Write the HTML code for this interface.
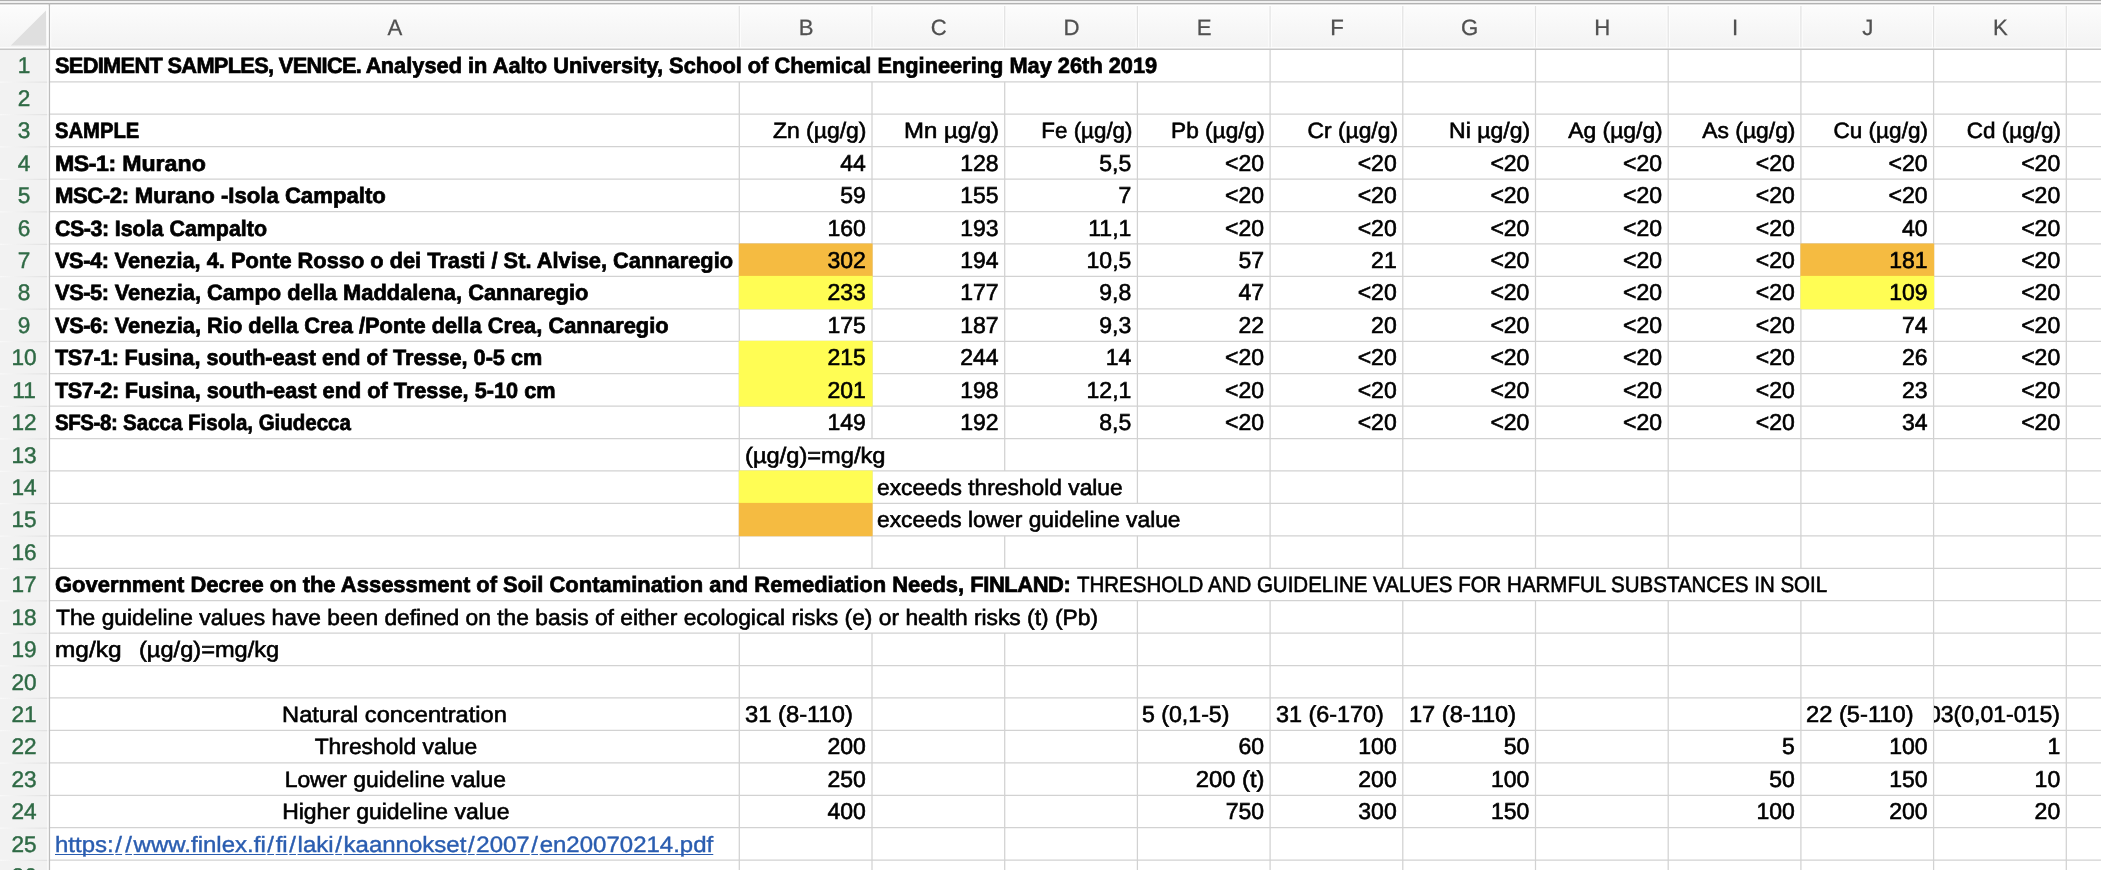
<!DOCTYPE html>
<html><head><meta charset="utf-8"><title>Sediment samples</title>
<style>
html,body{margin:0;padding:0;background:#fff;}
body{width:2101px;height:870px;overflow:hidden;position:relative;font-family:"Liberation Sans",sans-serif;}
#g{position:absolute;left:0;top:0;}
#tx{position:absolute;left:0;top:0;width:2101px;height:870px;will-change:transform;}
.t{position:absolute;white-space:pre;text-rendering:geometricPrecision;font-size:22.2px;line-height:26px;height:26px;}
.t span{display:inline-block;-webkit-text-stroke:0.6px currentColor;}
.b{font-weight:bold;}
.b span{-webkit-text-stroke-width:0.7px;}
i{font-style:normal;}
.url span{text-decoration:underline;text-decoration-thickness:1.3px;text-underline-offset:2.4px;text-decoration-skip-ink:none;-webkit-text-stroke-width:0.4px;}
.num{font-size:23.0px;}
.rn{font-size:22.6px;}
.rn span{-webkit-text-stroke-width:0.45px;}
.ch span{-webkit-text-stroke-width:0.25px;}
.clip{position:absolute;overflow:hidden;}
</style></head><body>

<svg id="g" width="2101" height="870" viewBox="0 0 2101 870">
<defs><linearGradient id="hg" gradientUnits="userSpaceOnUse" x1="0" x2="0" y1="5.7" y2="47.3"><stop offset="0" stop-color="#fcfcfc"/><stop offset="1" stop-color="#f3f3f3"/></linearGradient><linearGradient id="rg" gradientUnits="userSpaceOnUse" x1="0" x2="49" y1="0" y2="0"><stop offset="0" stop-color="#f9f9f9"/><stop offset="1" stop-color="#e0e0e0"/></linearGradient></defs>
<rect x="0" y="0" width="2101" height="870" fill="#fff"/>
<rect x="0" y="0" width="2101" height="4" fill="#f0f0f0"/>
<rect x="0" y="0" width="2101" height="0.8" fill="#a0a0a0"/>
<rect x="0" y="3.0" width="2101" height="1.4" fill="#b2b2b2"/>
<rect x="0" y="5.7" width="2101" height="41.6" fill="url(#hg)"/>
<rect x="0" y="49.38" width="49.40" height="820.62" fill="#f2f2f2"/>
<path d="M46 10.5 L46 45.6 L10.8 45.6 Z" fill="#dfdfdf"/>
<line x1="49.40" y1="81.81" x2="2101" y2="81.81" stroke="#d2d2d2" stroke-width="1.25"/>
<line x1="0" y1="82.11" x2="49.40" y2="82.11" stroke="url(#rg)" stroke-width="1.25"/>
<line x1="49.40" y1="114.24" x2="2101" y2="114.24" stroke="#d2d2d2" stroke-width="1.25"/>
<line x1="0" y1="114.54" x2="49.40" y2="114.54" stroke="url(#rg)" stroke-width="1.25"/>
<line x1="49.40" y1="146.67" x2="2101" y2="146.67" stroke="#d2d2d2" stroke-width="1.25"/>
<line x1="0" y1="146.97" x2="49.40" y2="146.97" stroke="url(#rg)" stroke-width="1.25"/>
<line x1="49.40" y1="179.10" x2="2101" y2="179.10" stroke="#d2d2d2" stroke-width="1.25"/>
<line x1="0" y1="179.40" x2="49.40" y2="179.40" stroke="url(#rg)" stroke-width="1.25"/>
<line x1="49.40" y1="211.53" x2="2101" y2="211.53" stroke="#d2d2d2" stroke-width="1.25"/>
<line x1="0" y1="211.83" x2="49.40" y2="211.83" stroke="url(#rg)" stroke-width="1.25"/>
<line x1="49.40" y1="243.96" x2="2101" y2="243.96" stroke="#d2d2d2" stroke-width="1.25"/>
<line x1="0" y1="244.26" x2="49.40" y2="244.26" stroke="url(#rg)" stroke-width="1.25"/>
<line x1="49.40" y1="276.39" x2="2101" y2="276.39" stroke="#d2d2d2" stroke-width="1.25"/>
<line x1="0" y1="276.69" x2="49.40" y2="276.69" stroke="url(#rg)" stroke-width="1.25"/>
<line x1="49.40" y1="308.82" x2="2101" y2="308.82" stroke="#d2d2d2" stroke-width="1.25"/>
<line x1="0" y1="309.12" x2="49.40" y2="309.12" stroke="url(#rg)" stroke-width="1.25"/>
<line x1="49.40" y1="341.25" x2="2101" y2="341.25" stroke="#d2d2d2" stroke-width="1.25"/>
<line x1="0" y1="341.55" x2="49.40" y2="341.55" stroke="url(#rg)" stroke-width="1.25"/>
<line x1="49.40" y1="373.68" x2="2101" y2="373.68" stroke="#d2d2d2" stroke-width="1.25"/>
<line x1="0" y1="373.98" x2="49.40" y2="373.98" stroke="url(#rg)" stroke-width="1.25"/>
<line x1="49.40" y1="406.11" x2="2101" y2="406.11" stroke="#d2d2d2" stroke-width="1.25"/>
<line x1="0" y1="406.41" x2="49.40" y2="406.41" stroke="url(#rg)" stroke-width="1.25"/>
<line x1="49.40" y1="438.54" x2="2101" y2="438.54" stroke="#d2d2d2" stroke-width="1.25"/>
<line x1="0" y1="438.84" x2="49.40" y2="438.84" stroke="url(#rg)" stroke-width="1.25"/>
<line x1="49.40" y1="470.97" x2="2101" y2="470.97" stroke="#d2d2d2" stroke-width="1.25"/>
<line x1="0" y1="471.27" x2="49.40" y2="471.27" stroke="url(#rg)" stroke-width="1.25"/>
<line x1="49.40" y1="503.40" x2="2101" y2="503.40" stroke="#d2d2d2" stroke-width="1.25"/>
<line x1="0" y1="503.70" x2="49.40" y2="503.70" stroke="url(#rg)" stroke-width="1.25"/>
<line x1="49.40" y1="535.83" x2="2101" y2="535.83" stroke="#d2d2d2" stroke-width="1.25"/>
<line x1="0" y1="536.13" x2="49.40" y2="536.13" stroke="url(#rg)" stroke-width="1.25"/>
<line x1="49.40" y1="568.26" x2="2101" y2="568.26" stroke="#d2d2d2" stroke-width="1.25"/>
<line x1="0" y1="568.56" x2="49.40" y2="568.56" stroke="url(#rg)" stroke-width="1.25"/>
<line x1="49.40" y1="600.69" x2="2101" y2="600.69" stroke="#d2d2d2" stroke-width="1.25"/>
<line x1="0" y1="600.99" x2="49.40" y2="600.99" stroke="url(#rg)" stroke-width="1.25"/>
<line x1="49.40" y1="633.12" x2="2101" y2="633.12" stroke="#d2d2d2" stroke-width="1.25"/>
<line x1="0" y1="633.42" x2="49.40" y2="633.42" stroke="url(#rg)" stroke-width="1.25"/>
<line x1="49.40" y1="665.55" x2="2101" y2="665.55" stroke="#d2d2d2" stroke-width="1.25"/>
<line x1="0" y1="665.85" x2="49.40" y2="665.85" stroke="url(#rg)" stroke-width="1.25"/>
<line x1="49.40" y1="697.98" x2="2101" y2="697.98" stroke="#d2d2d2" stroke-width="1.25"/>
<line x1="0" y1="698.28" x2="49.40" y2="698.28" stroke="url(#rg)" stroke-width="1.25"/>
<line x1="49.40" y1="730.41" x2="2101" y2="730.41" stroke="#d2d2d2" stroke-width="1.25"/>
<line x1="0" y1="730.71" x2="49.40" y2="730.71" stroke="url(#rg)" stroke-width="1.25"/>
<line x1="49.40" y1="762.84" x2="2101" y2="762.84" stroke="#d2d2d2" stroke-width="1.25"/>
<line x1="0" y1="763.14" x2="49.40" y2="763.14" stroke="url(#rg)" stroke-width="1.25"/>
<line x1="49.40" y1="795.27" x2="2101" y2="795.27" stroke="#d2d2d2" stroke-width="1.25"/>
<line x1="0" y1="795.57" x2="49.40" y2="795.57" stroke="url(#rg)" stroke-width="1.25"/>
<line x1="49.40" y1="827.70" x2="2101" y2="827.70" stroke="#d2d2d2" stroke-width="1.25"/>
<line x1="0" y1="828.00" x2="49.40" y2="828.00" stroke="url(#rg)" stroke-width="1.25"/>
<line x1="49.40" y1="860.13" x2="2101" y2="860.13" stroke="#d2d2d2" stroke-width="1.25"/>
<line x1="0" y1="860.43" x2="49.40" y2="860.43" stroke="url(#rg)" stroke-width="1.25"/>
<line x1="739.30" y1="81.81" x2="739.30" y2="568.26" stroke="#d2d2d2" stroke-width="1.25"/>
<line x1="739.30" y1="633.12" x2="739.30" y2="870.00" stroke="#d2d2d2" stroke-width="1.25"/>
<line x1="739.30" y1="6" x2="739.30" y2="48.4" stroke="#fdfdfd" stroke-width="3.4"/>
<line x1="739.30" y1="6" x2="739.30" y2="48.4" stroke="#e2e2e2" stroke-width="1.2"/>
<line x1="872.00" y1="81.81" x2="872.00" y2="438.54" stroke="#d2d2d2" stroke-width="1.25"/>
<line x1="872.00" y1="470.97" x2="872.00" y2="568.26" stroke="#d2d2d2" stroke-width="1.25"/>
<line x1="872.00" y1="633.12" x2="872.00" y2="870.00" stroke="#d2d2d2" stroke-width="1.25"/>
<line x1="872.00" y1="6" x2="872.00" y2="48.4" stroke="#fdfdfd" stroke-width="3.4"/>
<line x1="872.00" y1="6" x2="872.00" y2="48.4" stroke="#e2e2e2" stroke-width="1.2"/>
<line x1="1004.70" y1="81.81" x2="1004.70" y2="470.97" stroke="#d2d2d2" stroke-width="1.25"/>
<line x1="1004.70" y1="535.83" x2="1004.70" y2="568.26" stroke="#d2d2d2" stroke-width="1.25"/>
<line x1="1004.70" y1="633.12" x2="1004.70" y2="870.00" stroke="#d2d2d2" stroke-width="1.25"/>
<line x1="1004.70" y1="6" x2="1004.70" y2="48.4" stroke="#fdfdfd" stroke-width="3.4"/>
<line x1="1004.70" y1="6" x2="1004.70" y2="48.4" stroke="#e2e2e2" stroke-width="1.2"/>
<line x1="1137.40" y1="81.81" x2="1137.40" y2="503.40" stroke="#d2d2d2" stroke-width="1.25"/>
<line x1="1137.40" y1="535.83" x2="1137.40" y2="568.26" stroke="#d2d2d2" stroke-width="1.25"/>
<line x1="1137.40" y1="600.69" x2="1137.40" y2="870.00" stroke="#d2d2d2" stroke-width="1.25"/>
<line x1="1137.40" y1="6" x2="1137.40" y2="48.4" stroke="#fdfdfd" stroke-width="3.4"/>
<line x1="1137.40" y1="6" x2="1137.40" y2="48.4" stroke="#e2e2e2" stroke-width="1.2"/>
<line x1="1270.10" y1="49.38" x2="1270.10" y2="568.26" stroke="#d2d2d2" stroke-width="1.25"/>
<line x1="1270.10" y1="600.69" x2="1270.10" y2="870.00" stroke="#d2d2d2" stroke-width="1.25"/>
<line x1="1270.10" y1="6" x2="1270.10" y2="48.4" stroke="#fdfdfd" stroke-width="3.4"/>
<line x1="1270.10" y1="6" x2="1270.10" y2="48.4" stroke="#e2e2e2" stroke-width="1.2"/>
<line x1="1402.80" y1="49.38" x2="1402.80" y2="568.26" stroke="#d2d2d2" stroke-width="1.25"/>
<line x1="1402.80" y1="600.69" x2="1402.80" y2="870.00" stroke="#d2d2d2" stroke-width="1.25"/>
<line x1="1402.80" y1="6" x2="1402.80" y2="48.4" stroke="#fdfdfd" stroke-width="3.4"/>
<line x1="1402.80" y1="6" x2="1402.80" y2="48.4" stroke="#e2e2e2" stroke-width="1.2"/>
<line x1="1535.50" y1="49.38" x2="1535.50" y2="568.26" stroke="#d2d2d2" stroke-width="1.25"/>
<line x1="1535.50" y1="600.69" x2="1535.50" y2="870.00" stroke="#d2d2d2" stroke-width="1.25"/>
<line x1="1535.50" y1="6" x2="1535.50" y2="48.4" stroke="#fdfdfd" stroke-width="3.4"/>
<line x1="1535.50" y1="6" x2="1535.50" y2="48.4" stroke="#e2e2e2" stroke-width="1.2"/>
<line x1="1668.20" y1="49.38" x2="1668.20" y2="568.26" stroke="#d2d2d2" stroke-width="1.25"/>
<line x1="1668.20" y1="600.69" x2="1668.20" y2="870.00" stroke="#d2d2d2" stroke-width="1.25"/>
<line x1="1668.20" y1="6" x2="1668.20" y2="48.4" stroke="#fdfdfd" stroke-width="3.4"/>
<line x1="1668.20" y1="6" x2="1668.20" y2="48.4" stroke="#e2e2e2" stroke-width="1.2"/>
<line x1="1800.90" y1="49.38" x2="1800.90" y2="568.26" stroke="#d2d2d2" stroke-width="1.25"/>
<line x1="1800.90" y1="600.69" x2="1800.90" y2="870.00" stroke="#d2d2d2" stroke-width="1.25"/>
<line x1="1800.90" y1="6" x2="1800.90" y2="48.4" stroke="#fdfdfd" stroke-width="3.4"/>
<line x1="1800.90" y1="6" x2="1800.90" y2="48.4" stroke="#e2e2e2" stroke-width="1.2"/>
<line x1="1933.60" y1="49.38" x2="1933.60" y2="870.00" stroke="#d2d2d2" stroke-width="1.25"/>
<line x1="1933.60" y1="6" x2="1933.60" y2="48.4" stroke="#fdfdfd" stroke-width="3.4"/>
<line x1="1933.60" y1="6" x2="1933.60" y2="48.4" stroke="#e2e2e2" stroke-width="1.2"/>
<line x1="2066.30" y1="49.38" x2="2066.30" y2="870.00" stroke="#d2d2d2" stroke-width="1.25"/>
<line x1="2066.30" y1="6" x2="2066.30" y2="48.4" stroke="#fdfdfd" stroke-width="3.4"/>
<line x1="2066.30" y1="6" x2="2066.30" y2="48.4" stroke="#e2e2e2" stroke-width="1.2"/>
<rect x="738.80" y="243.46" width="133.80" height="33.33" fill="#f5bb41"/>
<rect x="738.80" y="275.89" width="133.80" height="33.33" fill="#fffd54"/>
<rect x="738.80" y="340.75" width="133.80" height="33.33" fill="#fffd54"/>
<rect x="738.80" y="373.18" width="133.80" height="33.33" fill="#fffd54"/>
<rect x="1800.40" y="243.46" width="133.80" height="33.33" fill="#f5bb41"/>
<rect x="1800.40" y="275.89" width="133.80" height="33.33" fill="#fffd54"/>
<rect x="738.80" y="470.47" width="133.80" height="33.33" fill="#fffd54"/>
<rect x="738.80" y="502.90" width="133.80" height="33.33" fill="#f5bb41"/>
<rect x="0" y="47.4" width="2101" height="1.1" fill="#fdfdfd"/>
<line x1="0" y1="49.20" x2="2101" y2="49.20" stroke="#c6c6c6" stroke-width="1.4"/>
<line x1="49.40" y1="3.6" x2="49.40" y2="870" stroke="#bdbdbd" stroke-width="1.4"/>
<rect x="46.9" y="5.7" width="1.7" height="42" fill="#fdfdfd"/>
<rect x="47.2" y="50" width="1.4" height="830" fill="#fafafa"/>
<rect x="50.2" y="5.7" width="1.0" height="42" fill="#fdfdfd"/>
</svg>
<div id="tx">
<div class="t b" style="left:55.30px;top:53.00px;color:#000;"><span id="a1" style="transform:scaleX(0.9824);transform-origin:left center"><i style="letter-spacing:-0.7px">SEDIMENT SAMPLES, VENICE. A</i>nalysed in Aalto University, School of Chemical Engineering May 26th 2019</span></div>
<div class="t b" style="left:55.30px;top:118.00px;color:#000;"><span id="a3" style="transform:scaleX(0.9117);transform-origin:left center">SAMPLE</span></div>
<div class="t b" style="left:55.00px;top:151.00px;color:#000;"><span id="a4" style="transform:scaleX(1.0440);transform-origin:left center"><i style="letter-spacing:-0.45px">MS-1:</i> Murano</span></div>
<div class="t b" style="left:55.00px;top:183.00px;color:#000;"><span id="a5" style="transform:scaleX(0.9982);transform-origin:left center"><i style="letter-spacing:-0.45px">MSC-2:</i> Murano -Isola Campalto</span></div>
<div class="t b" style="left:55.30px;top:216.00px;color:#000;"><span id="a6" style="transform:scaleX(0.9650);transform-origin:left center"><i style="letter-spacing:-0.45px">CS-3:</i> Isola Campalto</span></div>
<div class="t b" style="left:55.30px;top:248.00px;color:#000;"><span id="a7" style="transform:scaleX(0.9828);transform-origin:left center"><i style="letter-spacing:-0.45px">VS-4:</i> Venezia, 4. Ponte Rosso o dei Trasti / St. Alvise, Cannaregio</span></div>
<div class="t b" style="left:55.30px;top:280.00px;color:#000;"><span id="a8" style="transform:scaleX(0.9850);transform-origin:left center"><i style="letter-spacing:-0.45px">VS-5:</i> Venezia, Campo della Maddalena, Cannaregio</span></div>
<div class="t b" style="left:55.30px;top:313.00px;color:#000;"><span id="a9" style="transform:scaleX(0.9851);transform-origin:left center"><i style="letter-spacing:-0.45px">VS-6:</i> Venezia, Rio della Crea /Ponte della Crea, Cannaregio</span></div>
<div class="t b" style="left:55.30px;top:345.00px;color:#000;"><span id="a10" style="transform:scaleX(0.9762);transform-origin:left center"><i style="letter-spacing:-0.45px">TS7-1:</i> Fusina, south-east end of Tresse, 0-5 cm</span></div>
<div class="t b" style="left:55.30px;top:378.00px;color:#000;"><span id="a11" style="transform:scaleX(0.9786);transform-origin:left center"><i style="letter-spacing:-0.45px">TS7-2:</i> Fusina, south-east end of Tresse, 5-10 cm</span></div>
<div class="t b" style="left:55.30px;top:410.00px;color:#000;"><span id="a12" style="transform:scaleX(0.9236);transform-origin:left center"><i style="letter-spacing:-0.45px">SFS-8:</i> Sacca Fisola, Giudecca</span></div>
<div class="t" style="right:1234.20px;top:118.00px;color:#000;"><span id="hB" style="transform:scaleX(1.0335);transform-origin:right center">Zn (µg/g)</span></div>
<div class="t" style="right:1101.50px;top:118.00px;color:#000;"><span id="hC" style="transform:scaleX(1.0805);transform-origin:right center">Mn µg/g)</span></div>
<div class="t" style="right:968.80px;top:118.00px;color:#000;"><span id="hD" style="transform:scaleX(1.0070);transform-origin:right center">Fe (µg/g)</span></div>
<div class="t" style="right:836.10px;top:118.00px;color:#000;"><span id="hE" style="transform:scaleX(1.0216);transform-origin:right center">Pb (µg/g)</span></div>
<div class="t" style="right:703.40px;top:118.00px;color:#000;"><span id="hF" style="transform:scaleX(1.0286);transform-origin:right center">Cr (µg/g)</span></div>
<div class="t" style="right:570.70px;top:118.00px;color:#000;"><span id="hG" style="transform:scaleX(1.0379);transform-origin:right center">Ni µg/g)</span></div>
<div class="t" style="right:438.00px;top:118.00px;color:#000;"><span id="hH" style="transform:scaleX(1.0304);transform-origin:right center">Ag (µg/g)</span></div>
<div class="t" style="right:305.30px;top:118.00px;color:#000;"><span id="hI" style="transform:scaleX(1.0291);transform-origin:right center">As (µg/g)</span></div>
<div class="t" style="right:172.60px;top:118.00px;color:#000;"><span id="hJ" style="transform:scaleX(1.0157);transform-origin:right center">Cu (µg/g)</span></div>
<div class="t" style="right:39.90px;top:118.00px;color:#000;"><span id="hK" style="transform:scaleX(1.0125);transform-origin:right center">Cd (µg/g)</span></div>
<div class="t num" style="right:1235.10px;top:150.00px;color:#000;"><span id="dB4" style="transform:scaleX(1.0000);transform-origin:right center">44</span></div>
<div class="t num" style="right:1102.40px;top:150.00px;color:#000;"><span id="dC4" style="transform:scaleX(1.0000);transform-origin:right center">128</span></div>
<div class="t num" style="right:969.70px;top:150.00px;color:#000;"><span id="dD4" style="transform:scaleX(1.0000);transform-origin:right center">5,5</span></div>
<div class="t num" style="right:837.00px;top:150.00px;color:#000;"><span id="dE4" style="transform:scaleX(1.0000);transform-origin:right center">&lt;20</span></div>
<div class="t num" style="right:704.30px;top:150.00px;color:#000;"><span id="dF4" style="transform:scaleX(1.0000);transform-origin:right center">&lt;20</span></div>
<div class="t num" style="right:571.60px;top:150.00px;color:#000;"><span id="dG4" style="transform:scaleX(1.0000);transform-origin:right center">&lt;20</span></div>
<div class="t num" style="right:438.90px;top:150.00px;color:#000;"><span id="dH4" style="transform:scaleX(1.0000);transform-origin:right center">&lt;20</span></div>
<div class="t num" style="right:306.20px;top:150.00px;color:#000;"><span id="dI4" style="transform:scaleX(1.0000);transform-origin:right center">&lt;20</span></div>
<div class="t num" style="right:173.50px;top:150.00px;color:#000;"><span id="dJ4" style="transform:scaleX(1.0000);transform-origin:right center">&lt;20</span></div>
<div class="t num" style="right:40.80px;top:150.00px;color:#000;"><span id="dK4" style="transform:scaleX(1.0000);transform-origin:right center">&lt;20</span></div>
<div class="t num" style="right:1235.10px;top:182.00px;color:#000;"><span id="dB5" style="transform:scaleX(1.0000);transform-origin:right center">59</span></div>
<div class="t num" style="right:1102.40px;top:182.00px;color:#000;"><span id="dC5" style="transform:scaleX(1.0000);transform-origin:right center">155</span></div>
<div class="t num" style="right:969.70px;top:182.00px;color:#000;"><span id="dD5" style="transform:scaleX(1.0000);transform-origin:right center">7</span></div>
<div class="t num" style="right:837.00px;top:182.00px;color:#000;"><span id="dE5" style="transform:scaleX(1.0000);transform-origin:right center">&lt;20</span></div>
<div class="t num" style="right:704.30px;top:182.00px;color:#000;"><span id="dF5" style="transform:scaleX(1.0000);transform-origin:right center">&lt;20</span></div>
<div class="t num" style="right:571.60px;top:182.00px;color:#000;"><span id="dG5" style="transform:scaleX(1.0000);transform-origin:right center">&lt;20</span></div>
<div class="t num" style="right:438.90px;top:182.00px;color:#000;"><span id="dH5" style="transform:scaleX(1.0000);transform-origin:right center">&lt;20</span></div>
<div class="t num" style="right:306.20px;top:182.00px;color:#000;"><span id="dI5" style="transform:scaleX(1.0000);transform-origin:right center">&lt;20</span></div>
<div class="t num" style="right:173.50px;top:182.00px;color:#000;"><span id="dJ5" style="transform:scaleX(1.0000);transform-origin:right center">&lt;20</span></div>
<div class="t num" style="right:40.80px;top:182.00px;color:#000;"><span id="dK5" style="transform:scaleX(1.0000);transform-origin:right center">&lt;20</span></div>
<div class="t num" style="right:1235.10px;top:215.00px;color:#000;"><span id="dB6" style="transform:scaleX(1.0000);transform-origin:right center">160</span></div>
<div class="t num" style="right:1102.40px;top:215.00px;color:#000;"><span id="dC6" style="transform:scaleX(1.0000);transform-origin:right center">193</span></div>
<div class="t num" style="right:969.70px;top:215.00px;color:#000;"><span id="dD6" style="transform:scaleX(1.0000);transform-origin:right center">11,1</span></div>
<div class="t num" style="right:837.00px;top:215.00px;color:#000;"><span id="dE6" style="transform:scaleX(1.0000);transform-origin:right center">&lt;20</span></div>
<div class="t num" style="right:704.30px;top:215.00px;color:#000;"><span id="dF6" style="transform:scaleX(1.0000);transform-origin:right center">&lt;20</span></div>
<div class="t num" style="right:571.60px;top:215.00px;color:#000;"><span id="dG6" style="transform:scaleX(1.0000);transform-origin:right center">&lt;20</span></div>
<div class="t num" style="right:438.90px;top:215.00px;color:#000;"><span id="dH6" style="transform:scaleX(1.0000);transform-origin:right center">&lt;20</span></div>
<div class="t num" style="right:306.20px;top:215.00px;color:#000;"><span id="dI6" style="transform:scaleX(1.0000);transform-origin:right center">&lt;20</span></div>
<div class="t num" style="right:173.50px;top:215.00px;color:#000;"><span id="dJ6" style="transform:scaleX(1.0000);transform-origin:right center">40</span></div>
<div class="t num" style="right:40.80px;top:215.00px;color:#000;"><span id="dK6" style="transform:scaleX(1.0000);transform-origin:right center">&lt;20</span></div>
<div class="t num" style="right:1235.10px;top:247.00px;color:#000;"><span id="dB7" style="transform:scaleX(1.0000);transform-origin:right center">302</span></div>
<div class="t num" style="right:1102.40px;top:247.00px;color:#000;"><span id="dC7" style="transform:scaleX(1.0000);transform-origin:right center">194</span></div>
<div class="t num" style="right:969.70px;top:247.00px;color:#000;"><span id="dD7" style="transform:scaleX(1.0000);transform-origin:right center">10,5</span></div>
<div class="t num" style="right:837.00px;top:247.00px;color:#000;"><span id="dE7" style="transform:scaleX(1.0000);transform-origin:right center">57</span></div>
<div class="t num" style="right:704.30px;top:247.00px;color:#000;"><span id="dF7" style="transform:scaleX(1.0000);transform-origin:right center">21</span></div>
<div class="t num" style="right:571.60px;top:247.00px;color:#000;"><span id="dG7" style="transform:scaleX(1.0000);transform-origin:right center">&lt;20</span></div>
<div class="t num" style="right:438.90px;top:247.00px;color:#000;"><span id="dH7" style="transform:scaleX(1.0000);transform-origin:right center">&lt;20</span></div>
<div class="t num" style="right:306.20px;top:247.00px;color:#000;"><span id="dI7" style="transform:scaleX(1.0000);transform-origin:right center">&lt;20</span></div>
<div class="t num" style="right:173.50px;top:247.00px;color:#000;"><span id="dJ7" style="transform:scaleX(1.0000);transform-origin:right center">181</span></div>
<div class="t num" style="right:40.80px;top:247.00px;color:#000;"><span id="dK7" style="transform:scaleX(1.0000);transform-origin:right center">&lt;20</span></div>
<div class="t num" style="right:1235.10px;top:279.00px;color:#000;"><span id="dB8" style="transform:scaleX(1.0000);transform-origin:right center">233</span></div>
<div class="t num" style="right:1102.40px;top:279.00px;color:#000;"><span id="dC8" style="transform:scaleX(1.0000);transform-origin:right center">177</span></div>
<div class="t num" style="right:969.70px;top:279.00px;color:#000;"><span id="dD8" style="transform:scaleX(1.0000);transform-origin:right center">9,8</span></div>
<div class="t num" style="right:837.00px;top:279.00px;color:#000;"><span id="dE8" style="transform:scaleX(1.0000);transform-origin:right center">47</span></div>
<div class="t num" style="right:704.30px;top:279.00px;color:#000;"><span id="dF8" style="transform:scaleX(1.0000);transform-origin:right center">&lt;20</span></div>
<div class="t num" style="right:571.60px;top:279.00px;color:#000;"><span id="dG8" style="transform:scaleX(1.0000);transform-origin:right center">&lt;20</span></div>
<div class="t num" style="right:438.90px;top:279.00px;color:#000;"><span id="dH8" style="transform:scaleX(1.0000);transform-origin:right center">&lt;20</span></div>
<div class="t num" style="right:306.20px;top:279.00px;color:#000;"><span id="dI8" style="transform:scaleX(1.0000);transform-origin:right center">&lt;20</span></div>
<div class="t num" style="right:173.50px;top:279.00px;color:#000;"><span id="dJ8" style="transform:scaleX(1.0000);transform-origin:right center">109</span></div>
<div class="t num" style="right:40.80px;top:279.00px;color:#000;"><span id="dK8" style="transform:scaleX(1.0000);transform-origin:right center">&lt;20</span></div>
<div class="t num" style="right:1235.10px;top:312.00px;color:#000;"><span id="dB9" style="transform:scaleX(1.0000);transform-origin:right center">175</span></div>
<div class="t num" style="right:1102.40px;top:312.00px;color:#000;"><span id="dC9" style="transform:scaleX(1.0000);transform-origin:right center">187</span></div>
<div class="t num" style="right:969.70px;top:312.00px;color:#000;"><span id="dD9" style="transform:scaleX(1.0000);transform-origin:right center">9,3</span></div>
<div class="t num" style="right:837.00px;top:312.00px;color:#000;"><span id="dE9" style="transform:scaleX(1.0000);transform-origin:right center">22</span></div>
<div class="t num" style="right:704.30px;top:312.00px;color:#000;"><span id="dF9" style="transform:scaleX(1.0000);transform-origin:right center">20</span></div>
<div class="t num" style="right:571.60px;top:312.00px;color:#000;"><span id="dG9" style="transform:scaleX(1.0000);transform-origin:right center">&lt;20</span></div>
<div class="t num" style="right:438.90px;top:312.00px;color:#000;"><span id="dH9" style="transform:scaleX(1.0000);transform-origin:right center">&lt;20</span></div>
<div class="t num" style="right:306.20px;top:312.00px;color:#000;"><span id="dI9" style="transform:scaleX(1.0000);transform-origin:right center">&lt;20</span></div>
<div class="t num" style="right:173.50px;top:312.00px;color:#000;"><span id="dJ9" style="transform:scaleX(1.0000);transform-origin:right center">74</span></div>
<div class="t num" style="right:40.80px;top:312.00px;color:#000;"><span id="dK9" style="transform:scaleX(1.0000);transform-origin:right center">&lt;20</span></div>
<div class="t num" style="right:1235.10px;top:344.00px;color:#000;"><span id="dB10" style="transform:scaleX(1.0000);transform-origin:right center">215</span></div>
<div class="t num" style="right:1102.40px;top:344.00px;color:#000;"><span id="dC10" style="transform:scaleX(1.0000);transform-origin:right center">244</span></div>
<div class="t num" style="right:969.70px;top:344.00px;color:#000;"><span id="dD10" style="transform:scaleX(1.0000);transform-origin:right center">14</span></div>
<div class="t num" style="right:837.00px;top:344.00px;color:#000;"><span id="dE10" style="transform:scaleX(1.0000);transform-origin:right center">&lt;20</span></div>
<div class="t num" style="right:704.30px;top:344.00px;color:#000;"><span id="dF10" style="transform:scaleX(1.0000);transform-origin:right center">&lt;20</span></div>
<div class="t num" style="right:571.60px;top:344.00px;color:#000;"><span id="dG10" style="transform:scaleX(1.0000);transform-origin:right center">&lt;20</span></div>
<div class="t num" style="right:438.90px;top:344.00px;color:#000;"><span id="dH10" style="transform:scaleX(1.0000);transform-origin:right center">&lt;20</span></div>
<div class="t num" style="right:306.20px;top:344.00px;color:#000;"><span id="dI10" style="transform:scaleX(1.0000);transform-origin:right center">&lt;20</span></div>
<div class="t num" style="right:173.50px;top:344.00px;color:#000;"><span id="dJ10" style="transform:scaleX(1.0000);transform-origin:right center">26</span></div>
<div class="t num" style="right:40.80px;top:344.00px;color:#000;"><span id="dK10" style="transform:scaleX(1.0000);transform-origin:right center">&lt;20</span></div>
<div class="t num" style="right:1235.10px;top:377.00px;color:#000;"><span id="dB11" style="transform:scaleX(1.0000);transform-origin:right center">201</span></div>
<div class="t num" style="right:1102.40px;top:377.00px;color:#000;"><span id="dC11" style="transform:scaleX(1.0000);transform-origin:right center">198</span></div>
<div class="t num" style="right:969.70px;top:377.00px;color:#000;"><span id="dD11" style="transform:scaleX(1.0000);transform-origin:right center">12,1</span></div>
<div class="t num" style="right:837.00px;top:377.00px;color:#000;"><span id="dE11" style="transform:scaleX(1.0000);transform-origin:right center">&lt;20</span></div>
<div class="t num" style="right:704.30px;top:377.00px;color:#000;"><span id="dF11" style="transform:scaleX(1.0000);transform-origin:right center">&lt;20</span></div>
<div class="t num" style="right:571.60px;top:377.00px;color:#000;"><span id="dG11" style="transform:scaleX(1.0000);transform-origin:right center">&lt;20</span></div>
<div class="t num" style="right:438.90px;top:377.00px;color:#000;"><span id="dH11" style="transform:scaleX(1.0000);transform-origin:right center">&lt;20</span></div>
<div class="t num" style="right:306.20px;top:377.00px;color:#000;"><span id="dI11" style="transform:scaleX(1.0000);transform-origin:right center">&lt;20</span></div>
<div class="t num" style="right:173.50px;top:377.00px;color:#000;"><span id="dJ11" style="transform:scaleX(1.0000);transform-origin:right center">23</span></div>
<div class="t num" style="right:40.80px;top:377.00px;color:#000;"><span id="dK11" style="transform:scaleX(1.0000);transform-origin:right center">&lt;20</span></div>
<div class="t num" style="right:1235.10px;top:409.00px;color:#000;"><span id="dB12" style="transform:scaleX(1.0000);transform-origin:right center">149</span></div>
<div class="t num" style="right:1102.40px;top:409.00px;color:#000;"><span id="dC12" style="transform:scaleX(1.0000);transform-origin:right center">192</span></div>
<div class="t num" style="right:969.70px;top:409.00px;color:#000;"><span id="dD12" style="transform:scaleX(1.0000);transform-origin:right center">8,5</span></div>
<div class="t num" style="right:837.00px;top:409.00px;color:#000;"><span id="dE12" style="transform:scaleX(1.0000);transform-origin:right center">&lt;20</span></div>
<div class="t num" style="right:704.30px;top:409.00px;color:#000;"><span id="dF12" style="transform:scaleX(1.0000);transform-origin:right center">&lt;20</span></div>
<div class="t num" style="right:571.60px;top:409.00px;color:#000;"><span id="dG12" style="transform:scaleX(1.0000);transform-origin:right center">&lt;20</span></div>
<div class="t num" style="right:438.90px;top:409.00px;color:#000;"><span id="dH12" style="transform:scaleX(1.0000);transform-origin:right center">&lt;20</span></div>
<div class="t num" style="right:306.20px;top:409.00px;color:#000;"><span id="dI12" style="transform:scaleX(1.0000);transform-origin:right center">&lt;20</span></div>
<div class="t num" style="right:173.50px;top:409.00px;color:#000;"><span id="dJ12" style="transform:scaleX(1.0000);transform-origin:right center">34</span></div>
<div class="t num" style="right:40.80px;top:409.00px;color:#000;"><span id="dK12" style="transform:scaleX(1.0000);transform-origin:right center">&lt;20</span></div>
<div class="t num" style="right:1235.10px;top:733.00px;color:#000;"><span id="dB22" style="transform:scaleX(1.0000);transform-origin:right center">200</span></div>
<div class="t num" style="right:837.00px;top:733.00px;color:#000;"><span id="dE22" style="transform:scaleX(1.0000);transform-origin:right center">60</span></div>
<div class="t num" style="right:704.30px;top:733.00px;color:#000;"><span id="dF22" style="transform:scaleX(1.0000);transform-origin:right center">100</span></div>
<div class="t num" style="right:571.60px;top:733.00px;color:#000;"><span id="dG22" style="transform:scaleX(1.0000);transform-origin:right center">50</span></div>
<div class="t num" style="right:306.20px;top:733.00px;color:#000;"><span id="dI22" style="transform:scaleX(1.0000);transform-origin:right center">5</span></div>
<div class="t num" style="right:173.50px;top:733.00px;color:#000;"><span id="dJ22" style="transform:scaleX(1.0000);transform-origin:right center">100</span></div>
<div class="t num" style="right:40.80px;top:733.00px;color:#000;"><span id="dK22" style="transform:scaleX(1.0000);transform-origin:right center">1</span></div>
<div class="t num" style="right:1235.10px;top:766.00px;color:#000;"><span id="dB23" style="transform:scaleX(1.0000);transform-origin:right center">250</span></div>
<div class="t num" style="right:837.00px;top:766.00px;color:#000;"><span id="dE23" style="transform:scaleX(1.0349);transform-origin:right center">200 (t)</span></div>
<div class="t num" style="right:704.30px;top:766.00px;color:#000;"><span id="dF23" style="transform:scaleX(1.0000);transform-origin:right center">200</span></div>
<div class="t num" style="right:571.60px;top:766.00px;color:#000;"><span id="dG23" style="transform:scaleX(1.0000);transform-origin:right center">100</span></div>
<div class="t num" style="right:306.20px;top:766.00px;color:#000;"><span id="dI23" style="transform:scaleX(1.0000);transform-origin:right center">50</span></div>
<div class="t num" style="right:173.50px;top:766.00px;color:#000;"><span id="dJ23" style="transform:scaleX(1.0000);transform-origin:right center">150</span></div>
<div class="t num" style="right:40.80px;top:766.00px;color:#000;"><span id="dK23" style="transform:scaleX(1.0000);transform-origin:right center">10</span></div>
<div class="t num" style="right:1235.10px;top:798.00px;color:#000;"><span id="dB24" style="transform:scaleX(1.0000);transform-origin:right center">400</span></div>
<div class="t num" style="right:837.00px;top:798.00px;color:#000;"><span id="dE24" style="transform:scaleX(1.0000);transform-origin:right center">750</span></div>
<div class="t num" style="right:704.30px;top:798.00px;color:#000;"><span id="dF24" style="transform:scaleX(1.0000);transform-origin:right center">300</span></div>
<div class="t num" style="right:571.60px;top:798.00px;color:#000;"><span id="dG24" style="transform:scaleX(1.0000);transform-origin:right center">150</span></div>
<div class="t num" style="right:306.20px;top:798.00px;color:#000;"><span id="dI24" style="transform:scaleX(1.0000);transform-origin:right center">100</span></div>
<div class="t num" style="right:173.50px;top:798.00px;color:#000;"><span id="dJ24" style="transform:scaleX(1.0000);transform-origin:right center">200</span></div>
<div class="t num" style="right:40.80px;top:798.00px;color:#000;"><span id="dK24" style="transform:scaleX(1.0000);transform-origin:right center">20</span></div>
<div class="t" style="left:745.20px;top:443.00px;color:#000;"><span id="b13" style="transform:scaleX(1.0661);transform-origin:left center">(µg/g)=mg/kg</span></div>
<div class="t" style="left:877.20px;top:475.00px;color:#000;"><span id="c14" style="transform:scaleX(1.0268);transform-origin:left center">exceeds threshold value</span></div>
<div class="t" style="left:877.20px;top:507.00px;color:#000;"><span id="c15" style="transform:scaleX(1.0252);transform-origin:left center">exceeds lower guideline value</span></div>
<div class="t b" style="left:55.00px;top:572.00px;color:#000;"><span id="a17b" style="transform:scaleX(0.9894);transform-origin:left center">Government Decree on the Assessment of Soil Contamination and Remediation Needs, <i style="letter-spacing:-0.45px">FINLAND:</i></span></div>
<div class="t" style="left:1076.70px;top:572.00px;color:#000;"><span id="a17r" style="transform:scaleX(0.9237);transform-origin:left center">THRESHOLD AND GUIDELINE VALUES FOR HARMFUL SUBSTANCES IN SOIL</span></div>
<div class="t" style="left:55.70px;top:605.00px;color:#000;"><span id="a18" style="transform:scaleX(1.0279);transform-origin:left center">The guideline values have been defined on the basis of either ecological risks (e) or health risks (t) (Pb)</span></div>
<div class="t" style="left:54.60px;top:637.00px;color:#000;"><span id="a19a" style="transform:scaleX(1.1006);transform-origin:left center">mg/kg</span></div>
<div class="t" style="left:139.20px;top:637.00px;color:#000;"><span id="a19b" style="transform:scaleX(1.0637);transform-origin:left center">(µg/g)=mg/kg</span></div>
<div class="t" style="left:94.50px;width:600px;text-align:center;top:702.00px;color:#000;"><span id="a21" style="transform:scaleX(1.0654);transform-origin:center center">Natural concentration</span></div>
<div class="t" style="left:95.60px;width:600px;text-align:center;top:734.00px;color:#000;"><span id="a22" style="transform:scaleX(1.0299);transform-origin:center center">Threshold value</span></div>
<div class="t" style="left:95.80px;width:600px;text-align:center;top:767.00px;color:#000;"><span id="a23" style="transform:scaleX(1.0310);transform-origin:center center">Lower guideline value</span></div>
<div class="t" style="left:95.80px;width:600px;text-align:center;top:799.00px;color:#000;"><span id="a24" style="transform:scaleX(1.0352);transform-origin:center center">Higher guideline value</span></div>
<div class="t url" style="left:54.80px;top:832.00px;color:#2a5db0;"><span id="a25" style="transform:scaleX(1.0823);transform-origin:left center">https:<i style="padding:0 1.5px">/</i><i style="padding:0 1.5px">/</i>www.finlex.fi<i style="padding:0 1.5px">/</i>fi<i style="padding:0 1.5px">/</i>laki<i style="padding:0 1.5px">/</i>kaannokset<i style="padding:0 1.5px">/</i>2007<i style="padding:0 1.5px">/</i>en20070214.pdf</span></div>
<div class="t num" style="left:744.80px;top:701.00px;color:#000;"><span id="b21" style="transform:scaleX(1.0333);transform-origin:left center">31 (8-110)</span></div>
<div class="t num" style="left:1142.30px;top:701.00px;color:#000;"><span id="e21" style="transform:scaleX(1.0054);transform-origin:left center">5 (0,1-5)</span></div>
<div class="t num" style="left:1275.70px;top:701.00px;color:#000;"><span id="f21" style="transform:scaleX(1.0167);transform-origin:left center">31 (6-170)</span></div>
<div class="t num" style="left:1408.50px;top:701.00px;color:#000;"><span id="g21" style="transform:scaleX(1.0257);transform-origin:left center">17 (8-110)</span></div>
<div class="t num" style="left:1805.80px;top:701.00px;color:#000;"><span id="j21" style="transform:scaleX(1.0305);transform-origin:left center">22 (5-110)</span></div>
<div class="clip" style="left:1934.40px;top:701.00px;width:131.90px;height:30px"><div class="t num" style="right:6.00px;top:0;color:#000"><span id="k21" style="transform:scaleX(1.0014);transform-origin:right center">0,03(0,01-015)</span></div></div>
<div class="t rn" style="left:-276.00px;width:600px;text-align:center;top:53.00px;color:#2f6a45;"><span id="r1" style="transform:scaleX(1.0000);transform-origin:center center">1</span></div>
<div class="t rn" style="left:-276.00px;width:600px;text-align:center;top:86.00px;color:#2f6a45;"><span id="r2" style="transform:scaleX(1.0000);transform-origin:center center">2</span></div>
<div class="t rn" style="left:-276.00px;width:600px;text-align:center;top:118.00px;color:#2f6a45;"><span id="r3" style="transform:scaleX(1.0000);transform-origin:center center">3</span></div>
<div class="t rn" style="left:-276.00px;width:600px;text-align:center;top:151.00px;color:#2f6a45;"><span id="r4" style="transform:scaleX(1.0000);transform-origin:center center">4</span></div>
<div class="t rn" style="left:-276.00px;width:600px;text-align:center;top:183.00px;color:#2f6a45;"><span id="r5" style="transform:scaleX(1.0000);transform-origin:center center">5</span></div>
<div class="t rn" style="left:-276.00px;width:600px;text-align:center;top:216.00px;color:#2f6a45;"><span id="r6" style="transform:scaleX(1.0000);transform-origin:center center">6</span></div>
<div class="t rn" style="left:-276.00px;width:600px;text-align:center;top:248.00px;color:#2f6a45;"><span id="r7" style="transform:scaleX(1.0000);transform-origin:center center">7</span></div>
<div class="t rn" style="left:-276.00px;width:600px;text-align:center;top:280.00px;color:#2f6a45;"><span id="r8" style="transform:scaleX(1.0000);transform-origin:center center">8</span></div>
<div class="t rn" style="left:-276.00px;width:600px;text-align:center;top:313.00px;color:#2f6a45;"><span id="r9" style="transform:scaleX(1.0000);transform-origin:center center">9</span></div>
<div class="t rn" style="left:-276.00px;width:600px;text-align:center;top:345.00px;color:#2f6a45;"><span id="r10" style="transform:scaleX(1.0000);transform-origin:center center">10</span></div>
<div class="t rn" style="left:-276.00px;width:600px;text-align:center;top:378.00px;color:#2f6a45;"><span id="r11" style="transform:scaleX(1.0000);transform-origin:center center">11</span></div>
<div class="t rn" style="left:-276.00px;width:600px;text-align:center;top:410.00px;color:#2f6a45;"><span id="r12" style="transform:scaleX(1.0000);transform-origin:center center">12</span></div>
<div class="t rn" style="left:-276.00px;width:600px;text-align:center;top:443.00px;color:#2f6a45;"><span id="r13" style="transform:scaleX(1.0000);transform-origin:center center">13</span></div>
<div class="t rn" style="left:-276.00px;width:600px;text-align:center;top:475.00px;color:#2f6a45;"><span id="r14" style="transform:scaleX(1.0000);transform-origin:center center">14</span></div>
<div class="t rn" style="left:-276.00px;width:600px;text-align:center;top:507.00px;color:#2f6a45;"><span id="r15" style="transform:scaleX(1.0000);transform-origin:center center">15</span></div>
<div class="t rn" style="left:-276.00px;width:600px;text-align:center;top:540.00px;color:#2f6a45;"><span id="r16" style="transform:scaleX(1.0000);transform-origin:center center">16</span></div>
<div class="t rn" style="left:-276.00px;width:600px;text-align:center;top:572.00px;color:#2f6a45;"><span id="r17" style="transform:scaleX(1.0000);transform-origin:center center">17</span></div>
<div class="t rn" style="left:-276.00px;width:600px;text-align:center;top:605.00px;color:#2f6a45;"><span id="r18" style="transform:scaleX(1.0000);transform-origin:center center">18</span></div>
<div class="t rn" style="left:-276.00px;width:600px;text-align:center;top:637.00px;color:#2f6a45;"><span id="r19" style="transform:scaleX(1.0000);transform-origin:center center">19</span></div>
<div class="t rn" style="left:-276.00px;width:600px;text-align:center;top:670.00px;color:#2f6a45;"><span id="r20" style="transform:scaleX(1.0000);transform-origin:center center">20</span></div>
<div class="t rn" style="left:-276.00px;width:600px;text-align:center;top:702.00px;color:#2f6a45;"><span id="r21" style="transform:scaleX(1.0000);transform-origin:center center">21</span></div>
<div class="t rn" style="left:-276.00px;width:600px;text-align:center;top:734.00px;color:#2f6a45;"><span id="r22" style="transform:scaleX(1.0000);transform-origin:center center">22</span></div>
<div class="t rn" style="left:-276.00px;width:600px;text-align:center;top:767.00px;color:#2f6a45;"><span id="r23" style="transform:scaleX(1.0000);transform-origin:center center">23</span></div>
<div class="t rn" style="left:-276.00px;width:600px;text-align:center;top:799.00px;color:#2f6a45;"><span id="r24" style="transform:scaleX(1.0000);transform-origin:center center">24</span></div>
<div class="t rn" style="left:-276.00px;width:600px;text-align:center;top:832.00px;color:#2f6a45;"><span id="r25" style="transform:scaleX(1.0000);transform-origin:center center">25</span></div>
<div class="t rn" style="left:-276.00px;width:600px;text-align:center;top:864.00px;color:#2f6a45;"><span id="r26" style="transform:scaleX(1.0000);transform-origin:center center">26</span></div>
<div class="t ch" style="left:94.85px;width:600px;text-align:center;top:15.00px;color:#505050;"><span id="cA" style="transform:scaleX(1.0000);transform-origin:center center">A</span></div>
<div class="t ch" style="left:506.15px;width:600px;text-align:center;top:15.00px;color:#505050;"><span id="cB" style="transform:scaleX(1.0000);transform-origin:center center">B</span></div>
<div class="t ch" style="left:638.85px;width:600px;text-align:center;top:15.00px;color:#505050;"><span id="cC" style="transform:scaleX(1.0000);transform-origin:center center">C</span></div>
<div class="t ch" style="left:771.55px;width:600px;text-align:center;top:15.00px;color:#505050;"><span id="cD" style="transform:scaleX(1.0000);transform-origin:center center">D</span></div>
<div class="t ch" style="left:904.25px;width:600px;text-align:center;top:15.00px;color:#505050;"><span id="cE" style="transform:scaleX(1.0000);transform-origin:center center">E</span></div>
<div class="t ch" style="left:1036.95px;width:600px;text-align:center;top:15.00px;color:#505050;"><span id="cF" style="transform:scaleX(1.0000);transform-origin:center center">F</span></div>
<div class="t ch" style="left:1169.65px;width:600px;text-align:center;top:15.00px;color:#505050;"><span id="cG" style="transform:scaleX(1.0000);transform-origin:center center">G</span></div>
<div class="t ch" style="left:1302.35px;width:600px;text-align:center;top:15.00px;color:#505050;"><span id="cH" style="transform:scaleX(1.0000);transform-origin:center center">H</span></div>
<div class="t ch" style="left:1435.05px;width:600px;text-align:center;top:15.00px;color:#505050;"><span id="cI" style="transform:scaleX(1.0000);transform-origin:center center">I</span></div>
<div class="t ch" style="left:1567.75px;width:600px;text-align:center;top:15.00px;color:#505050;"><span id="cJ" style="transform:scaleX(1.0000);transform-origin:center center">J</span></div>
<div class="t ch" style="left:1700.45px;width:600px;text-align:center;top:15.00px;color:#505050;"><span id="cK" style="transform:scaleX(1.0000);transform-origin:center center">K</span></div>
</div>
</body></html>
